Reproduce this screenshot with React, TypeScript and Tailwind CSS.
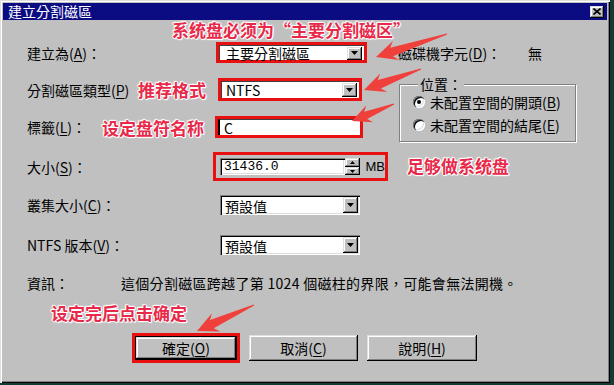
import React from "react";

type P = [number, number];

function arrow(tip: P, tail: P, headLen: number, headHalf: number, shaftHalf: number, tailHalf: number) {
  const dx = tail[0] - tip[0];
  const dy = tail[1] - tip[1];
  const L = Math.hypot(dx, dy);
  const ux = dx / L;
  const uy = dy / L;
  const px = -uy;
  const py = ux;
  const b = [tip[0] + ux * headLen, tip[1] + uy * headLen];
  const n = [tip[0] + ux * headLen * 0.78, tip[1] + uy * headLen * 0.78];
  const pts: number[][] = [
    tip,
    [b[0] + px * headHalf, b[1] + py * headHalf],
    [n[0] + px * shaftHalf, n[1] + py * shaftHalf],
    [tail[0] + px * tailHalf, tail[1] + py * tailHalf],
    [tail[0] - px * tailHalf, tail[1] - py * tailHalf],
    [n[0] - px * shaftHalf, n[1] - py * shaftHalf],
    [b[0] - px * headHalf, b[1] - py * headHalf],
  ];
  return pts.map((p) => `${p[0].toFixed(1)},${p[1].toFixed(1)}`).join(" ");
}

const raised =
  "shadow-[inset_-1px_-1px_0_#000000,inset_1px_1px_0_#dfdfdf,inset_-2px_-2px_0_#808080,inset_2px_2px_0_#ffffff]";
const sunken =
  "shadow-[inset_1px_1px_0_#808080,inset_2px_2px_0_#000000,inset_-1px_-1px_0_#ffffff,inset_-2px_-2px_0_#dfdfdf]";

function DropBtn({ w = 15, h = 13 }: { w?: number; h?: number }) {
  return (
    <div className={`bg-[#c0c0c0] ${raised} flex items-center justify-center shrink-0`} style={{ width: w, height: h }}>
      <svg width="7" height="4" viewBox="0 0 7 4">
        <polygon points="0,0 7,0 3.5,4" fill="#000" />
      </svg>
    </div>
  );
}

function Combo({ text }: { text: string }) {
  return (
    <div className={`w-[140px] h-[20px] bg-white ${sunken} flex items-center justify-between pl-[5px] pr-[2px]`}>
      <span className="leading-[16px] pt-[2px]">{text}</span>
      <DropBtn w={15} h={16} />
    </div>
  );
}

function U({ c }: { c: string }) {
  return <span className="underline underline-offset-2 decoration-1">{c}</span>;
}

const note =
  "absolute text-[17px] leading-[18px] font-bold text-[#e8294a] whitespace-nowrap [font-family:'Noto_Sans_CJK_SC',sans-serif] [text-shadow:1px_0_1px_#fff,-1px_0_1px_#fff,0_1px_1px_#fff,0_-1px_1px_#fff,1px_1px_1px_#fff,-1px_-1px_1px_#fff]";

export default function App() {
  return (
    <div className="w-[614px] h-[385px] bg-[#123c35] overflow-hidden [font-family:'Noto_Sans_CJK_TC','Noto_Sans_CJK_SC',sans-serif] text-[14px] text-black">
      <div className="relative w-[610px] h-[383px] bg-[#c0c0c0] shadow-[inset_1px_1px_0_#dfdfdf,inset_2px_2px_0_#ffffff,inset_-1px_-1px_0_#000000,inset_-2px_-2px_0_#808080] flex flex-col">
        {/* Title bar */}
        <div className="mx-[3px] mt-[3px] h-[17px] bg-[#0c0c82] flex items-center justify-between pl-[5px] pr-[3px]">
          <span className="text-white text-[14px] leading-[17px]">建立分割磁區</span>
          <div className={`w-[14px] h-[12px] bg-[#c0c0c0] ${raised} flex items-center justify-center`}>
            <svg width="8" height="7" viewBox="0 0 8 7">
              <path d="M0.5 0.5 L7.5 6.5 M7.5 0.5 L0.5 6.5" stroke="#000" strokeWidth="1.6" />
            </svg>
          </div>
        </div>

        {/* Row 1 */}
        <div className="mt-[22px] h-[21px] flex items-center">
          <div className="w-[216px] pl-[27px] leading-[18px]">
            建立為(<U c="A" />)：
          </div>
          <div className="w-[151px] h-[21px] border-[3px] border-[#e81010] flex">
            <div className="flex-1 bg-white border-t border-l border-[#404040] flex items-center justify-between pl-[6px] pr-[2px]">
              <span className="leading-[15px]">主要分割磁區</span>
              <DropBtn w={15} h={13} />
            </div>
          </div>
          <div className="ml-[31px] leading-[18px]">
            磁碟機字元(<U c="D" />)：
          </div>
          <div className="ml-[27px] leading-[18px]">無</div>
        </div>

        {/* Rows 2-3 with group box */}
        <div className="mt-[15px] h-[60px] flex">
          <div className="w-[399px] flex flex-col">
            <div className="h-[23px] flex items-center">
              <div className="w-[218px] pl-[27px] leading-[18px]">
                分割磁區類型(<U c="P" />)
              </div>
              <div className="w-[144px] h-[23px] border-[3px] border-[#e81010] flex">
                <div className="flex-1 bg-white border-t border-l border-[#404040] flex items-center justify-between pl-[4px] pr-[2px]">
                  <span className="leading-[17px]">NTFS</span>
                  <DropBtn w={15} h={14} />
                </div>
              </div>
            </div>
            <div className="mt-[15px] h-[22px] flex items-center">
              <div className="w-[215px] pl-[27px] leading-[18px]">
                標籤(<U c="L" />)：
              </div>
              <div className="w-[148px] h-[22px] border-[3px] border-[#e81010] flex">
                <div className="flex-1 bg-white border-l-2 border-t border-l-[#000] border-t-[#404040] flex items-center pl-[4px]">
                  <span className="leading-[16px]">C</span>
                </div>
              </div>
            </div>
          </div>
          <div className="relative mt-[6px] w-[177px] h-[58px] border border-[#808080] shadow-[1px_1px_0_#ffffff,inset_1px_1px_0_#ffffff] pt-[7px] pl-[13px] flex flex-col gap-[3px] shrink-0">
            <div className="absolute -top-[9px] left-[18px] px-[2px] bg-[#c0c0c0] leading-[16px]">位置：</div>
            <div className="h-[20px] flex items-center gap-[5px]">
              <div className={`w-[12px] h-[12px] rounded-full bg-white ${sunken} flex items-center justify-center`}>
                <div className="w-[4px] h-[4px] rounded-full bg-black" />
              </div>
              <span className="leading-[18px]">
                未配置空間的開頭(<U c="B" />)
              </span>
            </div>
            <div className="h-[20px] flex items-center gap-[5px]">
              <div className={`w-[12px] h-[12px] rounded-full bg-white ${sunken}`} />
              <span className="leading-[18px]">
                未配置空間的結尾(<U c="E" />)
              </span>
            </div>
          </div>
        </div>

        {/* Row 4 size */}
        <div className="mt-[14px] h-[29px] flex items-center">
          <div className="w-[213px] pl-[27px] leading-[18px]">
            大小(<U c="S" />)：
          </div>
          <div className="w-[175px] h-[29px] border-[3px] border-[#e81010] flex items-center pl-[4px]">
            <div className={`w-[126px] h-[17px] bg-white ${sunken} flex items-center pl-[4px]`}>
              <span className="[font-family:'Liberation_Mono',monospace] text-[13px] leading-[15px]">31436.0</span>
            </div>
            <div className="w-[15px] h-[17px] flex flex-col">
              <div className={`h-[9px] bg-[#c0c0c0] ${raised} flex items-center justify-center`}>
                <svg width="5" height="3" viewBox="0 0 5 3">
                  <polygon points="2.5,0 5,3 0,3" fill="#000" />
                </svg>
              </div>
              <div className={`h-[8px] bg-[#c0c0c0] ${raised} flex items-center justify-center`}>
                <svg width="5" height="3" viewBox="0 0 5 3">
                  <polygon points="0,0 5,0 2.5,3" fill="#000" />
                </svg>
              </div>
            </div>
            <span className="ml-[6px] text-[13px] leading-[15px] [font-family:'Liberation_Sans',sans-serif]">MB</span>
          </div>
        </div>

        {/* Row 5 */}
        <div className="mt-[14px] h-[20px] flex items-center">
          <div className="w-[220px] pl-[27px] leading-[18px]">
            叢集大小(<U c="C" />)：
          </div>
          <Combo text="預設值" />
        </div>

        {/* Row 6 */}
        <div className="mt-[20px] h-[20px] flex items-center">
          <div className="w-[220px] pl-[27px] leading-[18px]">
            NTFS 版本(<U c="V" />)：
          </div>
          <Combo text="預設值" />
        </div>

        {/* Info */}
        <div className="mt-[18px] h-[20px] flex items-center">
          <div className="w-[121px] pl-[27px] leading-[18px]">資訊：</div>
          <div className="leading-[18px] tracking-[0.3px] whitespace-nowrap">
            這個分割磁區跨越了第 1024 個磁柱的界限，可能會無法開機。
          </div>
        </div>

        {/* Buttons */}
        <div className="mt-[40px] h-[30px] flex items-center">
          <div className="w-[132px]" />
          <div className="w-[108px] h-[30px] border-[3px] border-[#e81010] flex">
            <div className="flex-1 border border-black flex">
              <div className={`flex-1 bg-[#c0c0c0] ${raised} flex items-center justify-center leading-[18px]`}>
                確定(<U c="O" />)
              </div>
            </div>
          </div>
          <div className={`ml-[9px] w-[109px] h-[26px] bg-[#c0c0c0] ${raised} flex items-center justify-center leading-[18px]`}>
            取消(<U c="C" />)
          </div>
          <div className={`ml-[9px] w-[110px] h-[26px] bg-[#c0c0c0] ${raised} flex items-center justify-center leading-[18px]`}>
            說明(<U c="H" />)
          </div>
        </div>

        {/* Annotations */}
        <div className={`${note} left-[172px] top-[21px] [font-feature-settings:'fwid']`}>系统盘必须为“主要分割磁区”</div>
        <div className={`${note} left-[138px] top-[81px]`}>推荐格式</div>
        <div className={`${note} left-[102px] top-[119px]`}>设定盘符名称</div>
        <div className={`${note} left-[407px] top-[157px]`}>足够做系统盘</div>
        <div className={`${note} left-[51px] top-[304px]`}>设定完后点击确定</div>

        <svg className="absolute left-0 top-0 pointer-events-none" width="610" height="383" viewBox="0 0 610 383">
          <g fill="#f0403c">
            <polygon points={arrow([376, 57], [447, 34], 21, 10, 4.5, 0.6)} />
            <polygon points={arrow([364, 90], [421, 69], 21, 10, 4.5, 0.6)} />
            <polygon points={arrow([352, 121], [394, 104], 19, 9, 4, 0.6)} />
            <polygon points={arrow([197, 331], [254, 305], 21, 10, 4.5, 0.6)} />
          </g>
        </svg>
      </div>
    </div>
  );
}
